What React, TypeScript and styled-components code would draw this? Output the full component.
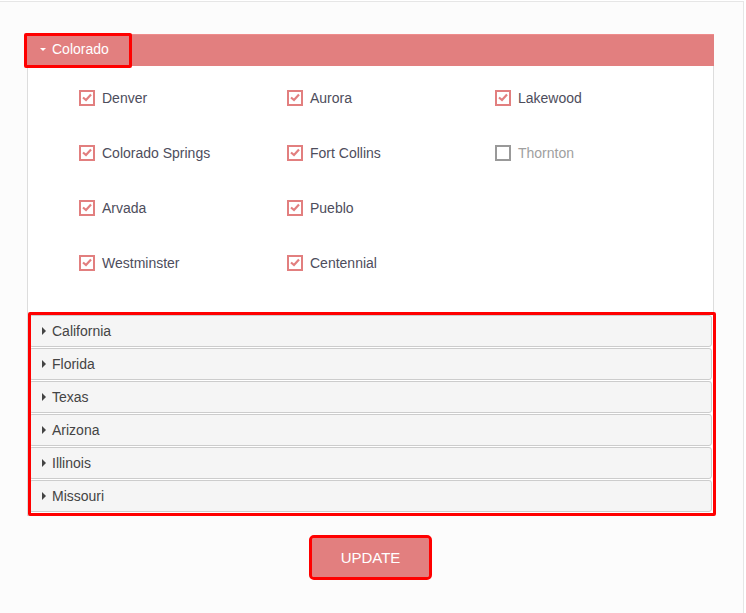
import React from 'react';
import styled, {createGlobalStyle} from 'styled-components';

const GlobalStyle = createGlobalStyle`
    html, body {
        margin: 0;
        padding: 0;
        background: #ffffff;
        font-family: "Liberation Sans", Arial, sans-serif;
    }`;

const Card = styled.div`
    box-sizing: border-box;
    width: 744px;
    height: 612px;
    margin-top: 1px;
    border-top: 1px solid #e6e6e6;
    border-right: 1px solid #e6e6e6;
    background: #fcfcfc;
    padding: 32px 0 0 27px;`;

const Panel = styled.div`
    box-sizing: border-box;
    width: 687px;
    background: #ffffff;
    border: 1px solid #dddddd;
    border-top: none;
    padding-bottom: 2px;`;

const Header = styled.div`
    position: relative;
    box-sizing: border-box;
    height: 32px;
    margin: 0 -1px;
    background: #e27f7f;
    border-top: 1px solid #ee8c8c;
    display: flex;
    align-items: center;
    padding: 0 0 3px 13px;
    color: #ffffff;
    font-size: 14px;`;

const Highlight = styled.div<{ $top: number, $left: number, $width: number, $height: number }>`
    position: absolute;
    top: ${p => p.$top}px;
    left: ${p => p.$left}px;
    width: ${p => p.$width}px;
    height: ${p => p.$height}px;
    box-sizing: border-box;
    border: 3px solid #ff0000;
    border-radius: 2px;
    pointer-events: none;`;

const CaretDown = styled.span`
    width: 0;
    height: 0;
    border-left: 3.5px solid transparent;
    border-right: 3.5px solid transparent;
    border-top: 3.5px solid #ffffff;
    margin-right: 6px;`;

const CaretRight = styled.span`
    width: 0;
    height: 0;
    border-top: 4px solid transparent;
    border-bottom: 4px solid transparent;
    border-left: 4px solid #444444;
    margin-right: 6px;`;

const CityGrid = styled.div`
    display: grid;
    grid-template-columns: repeat(3, 208px);
    grid-auto-rows: 55px;
    padding: 4px 0 25px 51px;`;

const City = styled.label<{ $off?: boolean }>`
    display: flex;
    align-items: center;
    gap: 7px;
    font-size: 14px;
    color: ${p => p.$off ? '#a0a0a0' : '#4d4d5c'};`;

const Box = styled.span<{ $off?: boolean }>`
    box-sizing: border-box;
    width: 16px;
    height: 16px;
    border: 2px solid ${p => p.$off ? '#999999' : '#e27f7f'};
    display: flex;
    align-items: center;
    justify-content: center;
    background: #ffffff;`;

const ListWrap = styled.div`
    position: relative;
    margin: 0 1px;`;

const StateRow = styled.div`
    box-sizing: border-box;
    height: 32px;
    margin-bottom: 1px;
    background: #f5f5f5;
    border: 1px solid #cccccc;
    border-radius: 3px;
    display: flex;
    align-items: center;
    padding-left: 12px;
    font-size: 14px;
    color: #444444;`;

const Footer = styled.div`
    width: 687px;
    display: flex;
    justify-content: center;
    padding-top: 22px;`;

const UpdateButton = styled.button`
    width: 117px;
    height: 39px;
    border: none;
    background: #e27f7f;
    color: #ffffff;
    font-family: "Liberation Sans", Arial, sans-serif;
    font-size: 15px;
    outline: 3px solid #ff0000;
    border-radius: 2px;
    cursor: pointer;`;

interface CityItem {
    name: string,
    checked: boolean
}

const cities: CityItem[] = [
    {name: 'Denver', checked: true},
    {name: 'Aurora', checked: true},
    {name: 'Lakewood', checked: true},
    {name: 'Colorado Springs', checked: true},
    {name: 'Fort Collins', checked: true},
    {name: 'Thornton', checked: false},
    {name: 'Arvada', checked: true},
    {name: 'Pueblo', checked: true},
    {name: '', checked: false},
    {name: 'Westminster', checked: true},
    {name: 'Centennial', checked: true},
];

const states = ['California', 'Florida', 'Texas', 'Arizona', 'Illinois', 'Missouri'];

const Check = () => (
    <svg width="10" height="9" viewBox="0 0 10 9">
        <path d="M1 4.5 L4 7 L9 1.5" fill="none" stroke="#e27f7f" strokeWidth="2.2" />
    </svg>
);

const App = () => (
    <>
        <GlobalStyle />
        <Card>
            <Panel>
                <Header>
                    <CaretDown />
                    Colorado
                    <Highlight $top={-2} $left={-3} $width={108} $height={35} />
                </Header>
                <CityGrid>
                    {cities.map((c, i) => c.name === ''
                        ? <div key={i} />
                        : (<City key={c.name} $off={!c.checked}>
                            <Box $off={!c.checked}>{c.checked && <Check />}</Box>
                            {c.name}
                        </City>))}
                </CityGrid>
                <ListWrap>
                    {states.map(s => (
                        <StateRow key={s}>
                            <CaretRight />
                            {s}
                        </StateRow>
                    ))}
                    <Highlight $top={-3} $left={-1} $width={688} $height={204} />
                </ListWrap>
            </Panel>
            <Footer>
                <UpdateButton>UPDATE</UpdateButton>
            </Footer>
        </Card>
    </>
);

export default App;
